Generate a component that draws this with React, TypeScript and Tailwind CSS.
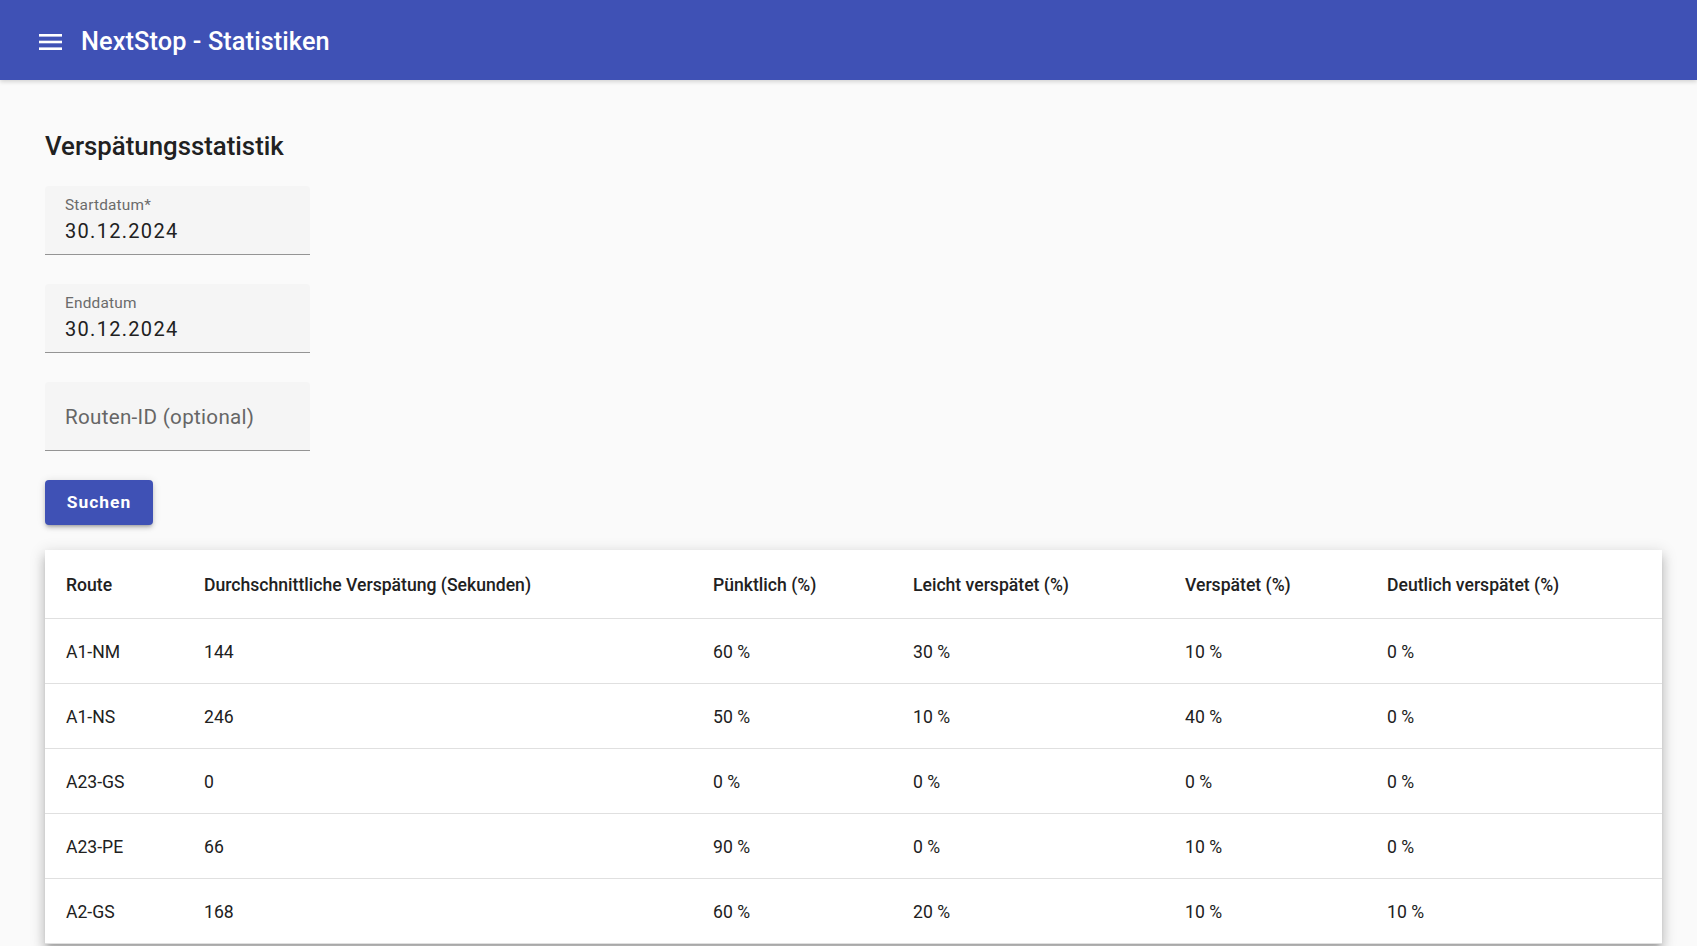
import React from 'react';

type Row = {
  route: string;
  avg: number;
  onTime: number;
  slight: number;
  late: number;
  veryLate: number;
};

const rows: Row[] = [
  { route: 'A1-NM', avg: 144, onTime: 60, slight: 30, late: 10, veryLate: 0 },
  { route: 'A1-NS', avg: 246, onTime: 50, slight: 10, late: 40, veryLate: 0 },
  { route: 'A23-GS', avg: 0, onTime: 0, slight: 0, late: 0, veryLate: 0 },
  { route: 'A23-PE', avg: 66, onTime: 90, slight: 0, late: 10, veryLate: 0 },
  { route: 'A2-GS', avg: 168, onTime: 60, slight: 20, late: 10, veryLate: 10 },
];

const gridCols = 'grid grid-cols-[138px_509px_200px_272px_202px_1fr] pl-[21px]';

const MenuIcon = () => (
  <svg width="23" height="16" viewBox="0 0 23 16" fill="white" aria-hidden>
    <rect x="0" y="0" width="23" height="2.6" />
    <rect x="0" y="6.7" width="23" height="2.6" />
    <rect x="0" y="13.4" width="23" height="2.6" />
  </svg>
);

const FilledField: React.FC<{ label?: string; value?: string; placeholder?: string }> = ({
  label,
  value,
  placeholder,
}) => (
  <div className="w-[265px] h-[69px] bg-[#f5f5f5] rounded-t-[4px] border-b border-[#949494] px-[20px]">
    {placeholder ? (
      <div className="h-full flex items-center pt-[2px] text-[20.6px] tracking-[0.3px] text-[#666666]">{placeholder}</div>
    ) : (
      <div className="pt-[10px]">
        <div className="text-[15.4px] leading-[18px] text-[#6b6b6b] tracking-[0.2px]">{label}</div>
        <div className="mt-[5px] text-[20px] leading-[24px] text-[#212121] tracking-[1.3px]">{value}</div>
      </div>
    )}
  </div>
);

export default function App() {
  return (
    <div className="min-h-screen bg-[#fafafa] font-['Roboto',sans-serif] text-[#212121]">
      <header className="h-[80px] bg-[#3f51b5] flex items-center pt-[4px] pl-[39px] gap-[19px] shadow-[0_2px_4px_rgba(0,0,0,0.15)]">
        <MenuIcon />
        <h1 className="text-[25.3px] font-medium text-white tracking-[0.1px]">NextStop - Statistiken</h1>
      </header>

      <main className="pl-[45px] pr-[35px] pt-[50px]">
        <h2 className="text-[25.8px] leading-[32px] font-medium text-[#212121]">Verspätungsstatistik</h2>

        <div className="mt-[24px] flex flex-col gap-[29px]">
          <FilledField label="Startdatum*" value="30.12.2024" />
          <FilledField label="Enddatum" value="30.12.2024" />
          <FilledField placeholder="Routen-ID (optional)" />
        </div>

        <button className="mt-[29px] w-[108px] h-[45px] rounded-[4px] bg-[#3f51b5] text-white text-[17.4px] font-bold tracking-[1px] shadow-[0_3px_3px_-2px_rgba(0,0,0,0.2),0_3px_4px_rgba(0,0,0,0.14),0_1px_8px_rgba(0,0,0,0.12)]">
          Suchen
        </button>

        <div className="mt-[25px] bg-white shadow-[0_5px_5px_-3px_rgba(0,0,0,0.2),0_8px_10px_1px_rgba(0,0,0,0.14),0_3px_14px_2px_rgba(0,0,0,0.12)]">
          <div className={`${gridCols} h-[69px] pt-[3px] items-center border-b border-[#e0e0e0] text-[17.6px] font-medium text-[#212121]`}>
            <div>Route</div>
            <div>Durchschnittliche Verspätung (Sekunden)</div>
            <div>Pünktlich (%)</div>
            <div>Leicht verspätet (%)</div>
            <div>Verspätet (%)</div>
            <div>Deutlich verspätet (%)</div>
          </div>
          {rows.map((r) => (
            <div
              key={r.route}
              className={`${gridCols} h-[65px] pt-[3px] items-center border-b border-[#e0e0e0] text-[17.6px] text-[#212121]`}
            >
              <div>{r.route}</div>
              <div>{r.avg}</div>
              <div>{r.onTime} %</div>
              <div>{r.slight} %</div>
              <div>{r.late} %</div>
              <div>{r.veryLate} %</div>
            </div>
          ))}
        </div>
      </main>
    </div>
  );
}
